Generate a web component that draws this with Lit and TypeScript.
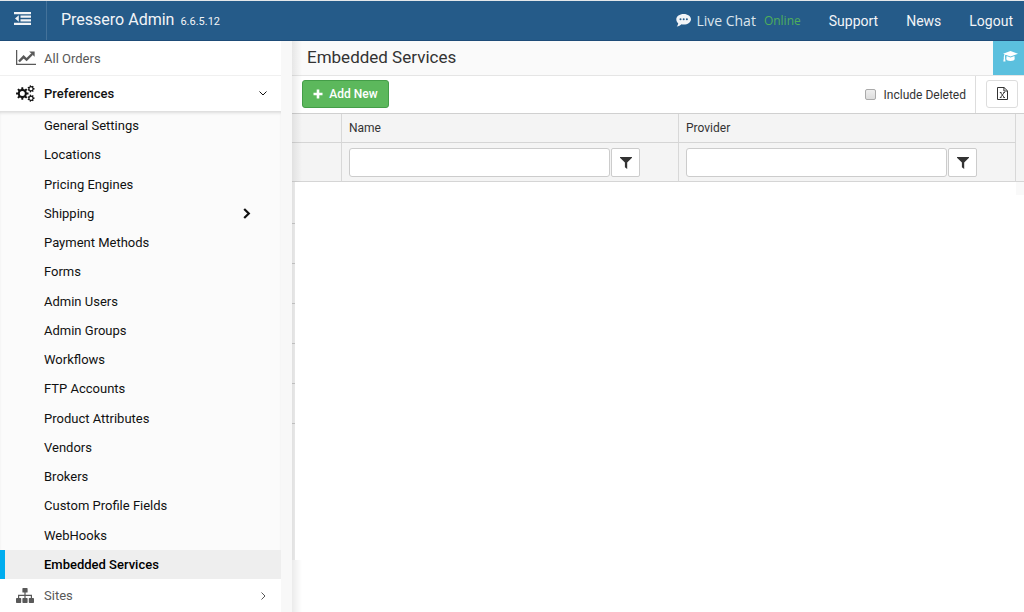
import { LitElement, html, svg, css } from "lit";
import { customElement, state } from "lit/decorators.js";

const gearTeeth = (cx: number, cy: number, inner: number, outer: number, hole: number, teeth: number) => {
  const points: string[] = [];
  const step = (Math.PI * 2) / teeth;
  for (let i = 0; i < teeth; i++) {
    const a = i * step;
    for (const [r, o] of [[inner, -0.3], [outer, -0.18], [outer, 0.18], [inner, 0.3]]) {
      points.push(`${(cx + r * Math.cos(a + o * step)).toFixed(2)} ${(cy + r * Math.sin(a + o * step)).toFixed(2)}`);
    }
  }
  return `M${points.join("L")}ZM${cx - hole} ${cy}a${hole} ${hole} 0 1 0 ${hole * 2} 0a${hole} ${hole} 0 1 0 ${-hole * 2} 0Z`;
};

const icons = {
  outdent: svg`<svg width="17" height="13" viewBox="0 0 17 13" fill="currentColor"><path d="M0 0h17v2.200H0zM6.500 3.600H17v2.200H6.500zM6.500 7.200H17v2.200H6.500zM0 10.800h17V13H0zM4.800 3.300v6.400L1 6.500z"/></svg>`,
  chart: svg`<svg width="20" height="16" viewBox="0 0 20 16"><path d="M.6 0v14.4H20" fill="none" stroke="currentColor" stroke-width="1.3"/><path d="M3 11.5l4.6-4.7 3 2.8 5.6-5.6" fill="none" stroke="currentColor" stroke-width="2.4"/><path d="M13.2 1.4h5.4v5.3z" fill="currentColor"/></svg>`,
  gears: svg`<svg width="19" height="17" viewBox="0 0 19 17" fill="currentColor" fill-rule="evenodd"><path d="${gearTeeth(6.3, 8.5, 4.6, 6.3, 2.5, 8)}"/><path d="${gearTeeth(15, 3.8, 2.7, 3.6, 1.5, 7)}"/><path d="${gearTeeth(15, 13.2, 2.7, 3.6, 1.5, 7)}"/></svg>`,
  sitemap: svg`<svg width="18" height="15" viewBox="0 0 18 15" fill="currentColor"><rect x="6.4" width="5.2" height="4.6" rx=".7"/><rect y="10" width="5.2" height="5" rx=".7"/><rect x="6.4" y="10" width="5.2" height="5" rx=".7"/><rect x="12.8" y="10" width="5.2" height="5" rx=".7"/><path d="M2.6 10.5V7.3h12.8v3.2M9 4v6.5" fill="none" stroke="currentColor" stroke-width="1.2"/></svg>`,
  chat: svg`<svg width="15" height="13" viewBox="0 0 15 13"><path d="M7.7 0C11.8 0 15 2.3 15 5.2s-3.2 5.3-7.3 5.3c-.8 0-1.500-.1-2.200-.3C4.300 11.400 2.800 12.200.8 12.400c.8-.9 1.300-1.800 1.400-3.200C1 8.200.3 6.800.3 5.200.3 2.300 3.600 0 7.700 0z" fill="#f2f4f7"/><g fill="#255b89"><circle cx="4.500" cy="5.200" r="1"/><circle cx="7.700" cy="5.200" r="1"/><circle cx="10.900" cy="5.200" r="1"/></g></svg>`,
  cap: svg`<svg width="15" height="11" viewBox="0 0 15 11" fill="currentColor"><path d="M7.500 0L15 2.700 7.500 5.400 2.600 3.700c-.5.400-.7 1.100-.7 1.900.4.300.4.900.1 1.200L2.500 10.500H.3L.9 6.800c-.4-.4-.3-1 .1-1.200 0-.9.200-1.700.6-2.300L0 2.700z"/><path d="M3.600 5l3.900 1.400L11.500 5l.2 2.900c0 1.100-1.900 2-4.200 2s-4.200-.9-4.200-2z"/></svg>`,
  plus: svg`<svg width="10" height="10" viewBox="0 0 10 10"><path d="M5 .5v9M.5 5h9" stroke="currentColor" stroke-width="2.600"/></svg>`,
  filter: svg`<svg width="12" height="12" viewBox="0 0 12 12" fill="currentColor"><path d="M0 0h12v.8L7.200 5.600V12L4.900 10.200V5.600L0 .8z"/></svg>`,
  excel: svg`<svg width="11" height="13" viewBox="0 0 11 13" fill="none" stroke="currentColor"><path d="M.5.5h6.500l3.500 3.300v8.700H.5zM6.900.5v3.500h3.600"/><path d="M3.500 5.500l3.700 5M7.200 5.500l-3.700 5M2.800 5.500h1.700M6.300 5.500H8M2.800 10.500h1.700M6.300 10.500H8" stroke-width=".9"/></svg>`,
  down: svg`<svg width="8" height="5" viewBox="0 0 8 5" fill="none" stroke="currentColor"><path d="M.5.5L4 4 7.500.5"/></svg>`,
  right: svg`<svg width="5" height="8" viewBox="0 0 5 8" fill="none" stroke="currentColor"><path d="M.5.5L4 4 .5 7.500"/></svg>`,
  rightBold: svg`<svg width="8" height="11" viewBox="0 0 8 11" fill="none" stroke="currentColor" stroke-width="2.200"><path d="M1.200 1l4.600 4.500L1.200 10"/></svg>`,
};

const preferences = [
  "General Settings", "Locations", "Pricing Engines", "Shipping", "Payment Methods", "Forms",
  "Admin Users", "Admin Groups", "Workflows", "FTP Accounts", "Product Attributes", "Vendors",
  "Brokers", "Custom Profile Fields", "WebHooks", "Embedded Services",
];

@customElement("app-topbar")
class AppTopbar extends LitElement {
  static styles = css`
    :host { display: block; }
    .bar { display: flex; align-items: stretch; height: 41px; box-sizing: border-box; border-top: 1px solid #e4e7ea; border-bottom: 1px solid #1e4c78; background: #255b89; color: #f2f4f7; }
    .toggle { width: 47px; padding: 0 1px 4px 0; border: 0; border-right: 1px solid #44729a; background: none; color: inherit; display: flex; align-items: center; justify-content: center; }
    .brand { margin: 0; padding-left: 14px; flex: 1; font-size: 16px; font-weight: 400; line-height: 37px; }
    .version { margin-left: 2px; font-size: 11px; }
    nav { display: flex; gap: 28px; padding-right: 11px; line-height: 40px; font-size: 14px; }
    a { color: inherit; text-decoration: none; white-space: nowrap; }
    .chat { display: flex; align-items: center; font-family: "Open Sans", sans-serif; color: #dde5ec; }
    .chat svg { margin-right: 5px; }
    .online { margin-left: 8px; font-size: 12px; color: #4fae5b; }
  `;
  render() {
    return html`<header class="bar">
      <button class="toggle" aria-label="Toggle menu">${icons.outdent}</button>
      <h1 class="brand">Pressero Admin <span class="version">6.6.5.12</span></h1>
      <nav>
        <a class="chat" href="#chat">${icons.chat}<span>Live Chat</span><span class="online">Online</span></a>
        <a href="#support">Support</a><a href="#news">News</a><a href="#logout">Logout</a>
      </nav>
    </header>`;
  }
}

@customElement("app-sidebar")
class AppSidebar extends LitElement {
  static styles = css`
    :host { display: flex; flex-direction: column; background: #fff; font-size: 13px; }
    a { color: #595959; text-decoration: none; display: flex; align-items: center; box-sizing: border-box; }
    .top { height: 34px; padding: 0 14px 0 16px; flex: none; }
    .top span { flex: 1; }
    .top .icon { flex: 0 0 28px; display: flex; }
    .top .arrow { flex: none; width: 8px; display: flex; justify-content: center; }
    .open { height: 36px; border-top: 1px solid #f0f0f0; color: #111; font-weight: 500; }
    .last { height: 33px; }
    .sub { list-style: none; margin: 0; padding: 0; flex: 1; display: flex; flex-direction: column; background: #fbfbfb; box-shadow: inset 0 3px 3px -1px #dcdcdc; }
    .sub li { flex: 1; min-height: 29px; max-height: 30px; display: flex; }
    .sub a { flex: 1; padding: 0 30px 0 44px; color: #111; }
    .sub span { flex: 1; }
    .sub .active { background: #eee; box-shadow: inset 5px 0 #00adef; font-weight: 500; color: #000; }
  `;
  render() {
    return html`
      <a class="top" href="#orders"><span class="icon">${icons.chart}</span><span>All Orders</span></a>
      <a class="top open" href="#preferences"><span class="icon">${icons.gears}</span><span>Preferences</span><span class="arrow">${icons.down}</span></a>
      <ul class="sub">
        ${preferences.map((name) => html`<li><a href="#" class=${name === "Embedded Services" ? "active" : ""}><span>${name}</span>${name === "Shipping" ? icons.rightBold : ""}</a></li>`)}
      </ul>
      <a class="top last" href="#sites"><span class="icon">${icons.sitemap}</span><span>Sites</span><span class="arrow">${icons.right}</span></a>`;
  }
}

@customElement("app-services")
class AppServices extends LitElement {
  static styles = css`
    :host { display: flex; flex-direction: column; position: relative; background: #fff; color: #333; font-size: 12px; }
    :host::after { content: ""; position: absolute; inset: 0 auto 0 0; width: 10px; background: linear-gradient(to right, rgba(0,0,0,.08), rgba(0,0,0,0)); pointer-events: none; }
    .title { display: flex; height: 34px; border-bottom: 1px solid #e5e5e5; background: #fafafa; }
    h2 { flex: 1; margin: 0; padding-left: 15px; font-size: 17px; font-weight: 400; line-height: 32px; }
    .help { width: 31px; display: flex; align-items: center; justify-content: center; padding: 0 0 3px 3px; box-sizing: border-box; background: #5bc0de; color: #fff; }
    .tools { display: flex; align-items: center; height: 37px; border-bottom: 1px solid #d0d0d0; }
    button { font: inherit; color: inherit; background: #fff; border: 1px solid #ccc; border-radius: 2px; display: flex; align-items: center; justify-content: center; padding: 0; box-sizing: border-box; }
    .tools button { height: 28px; margin-bottom: 2px; border-radius: 3px; }
    .tools .add { width: 87px; margin-left: 10px; margin-right: auto; gap: 6px; background: #5cb85c; border-color: #449d48; color: #fff; font-weight: 500; }
    .check { display: flex; align-items: center; gap: 8px; height: 100%; padding-right: 9px; border-right: 1px solid #ddd; }
    .check input { appearance: none; box-sizing: border-box; width: 11px; height: 11px; margin: 0; border: 1px solid #aaa; border-radius: 2px; background: linear-gradient(#eee, #ddd); }
    .check input:checked { background: #5bc0de; }
    .tools .export { width: 32px; margin-left: 10px; margin-right: 6px; border-color: #ddd; }
    table { width: 100%; table-layout: fixed; border-collapse: separate; border-spacing: 0; background: #f4f4f4; }
    th { box-sizing: border-box; padding: 0 0 0 7px; height: 29px; border-right: 1px solid #d8d8d8; border-bottom: 1px solid #d5d5d5; font-weight: 400; text-align: left; }
    .filters th { height: 39px; padding-right: 38px; }
    .rail { width: 50px; }
    .end { width: 8px; padding: 0; border-right: 0; }
    .filter { display: flex; gap: 1px; }
    .filter input { flex: 1; min-width: 0; height: 29px; box-sizing: border-box; margin: 0; padding: 0 6px; border: 1px solid #ccc; border-radius: 3px; font: inherit; }
    .filter button { flex: none; width: 29px; height: 29px; padding-top: 2px; }
    .rows { flex: 1; display: flex; margin-bottom: 52px; }
    .edge { width: 3px; padding-top: 41px; background: #f4f4f4; }
    .tick { height: 40px; border-top: 1px solid #ccc; box-sizing: border-box; }
    .blank { flex: 1; position: relative; z-index: 1; background: #fff; }
    .corner { width: 8px; height: 13px; position: relative; z-index: 1; background: #f9f9f9; }
  `;
  @state() private includeDeleted = false;
  private filterCell(name: string) {
    return html`<th><div class="filter"><input type="text" aria-label=${`${name} filter`}><button aria-label=${`${name} filter options`}>${icons.filter}</button></div></th>`;
  }
  render() {
    return html`
      <div class="title"><h2>Embedded Services</h2><a class="help" href="#help" aria-label="Help">${icons.cap}</a></div>
      <div class="tools">
        <button class="add">${icons.plus}<span>Add New</span></button>
        <label class="check"><input type="checkbox" .checked=${this.includeDeleted} @change=${(e: Event) => (this.includeDeleted = (e.target as HTMLInputElement).checked)}>Include Deleted</label>
        <button class="export" aria-label="Export to Excel">${icons.excel}</button>
      </div>
      <table>
        <thead>
          <tr><th class="rail"></th><th>Name</th><th>Provider</th><th class="end" rowspan="2"></th></tr>
          <tr class="filters"><th></th>${this.filterCell("Name")}${this.filterCell("Provider")}</tr>
        </thead>
      </table>
      <div class="rows">
        <div class="edge">${[0, 1, 2, 3, 4, 5].map(() => html`<div class="tick"></div>`)}</div>
        <div class="blank"></div>
        <div class="corner"></div>
      </div>`;
  }
}

@customElement("app-root")
class AppRoot extends LitElement {
  static styles = css`
    :host { display: flex; flex-direction: column; min-height: 100vh; font-family: Roboto, sans-serif; background: #f8f8f8; }
    .page { flex: 1; display: grid; grid-template-columns: 281px minmax(0, 1fr); column-gap: 11px; }
  `;
  render() {
    return html`<app-topbar></app-topbar><div class="page"><app-sidebar></app-sidebar><app-services></app-services></div>`;
  }
}
